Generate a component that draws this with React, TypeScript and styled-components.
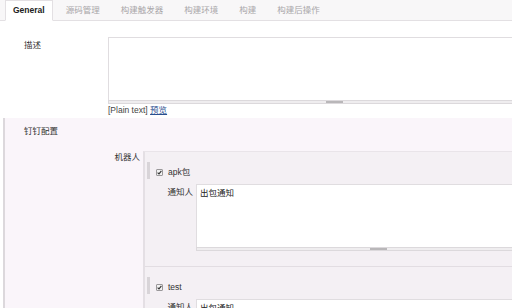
import React from "react";
import styled, { createGlobalStyle } from "styled-components";

const Global = createGlobalStyle`
  html, body { margin: 0; padding: 0; background: #ffffff; overflow: hidden; }
  body {
    font-family: "Liberation Sans", "Noto Sans CJK SC", sans-serif;
    font-size: 8.5px;
    color: #333;
  }
`;

const Page = styled.div`
  width: 560px;
  height: 308px;
  overflow: hidden;
`;

const TabBar = styled.div`
  display: flex;
  align-items: flex-end;
  height: 20px;
  padding-left: 5px;
  background: #f8f7f8;
  border-bottom: 1px solid #e3e0e3;
`;

const Tab = styled.div<{ $active?: boolean }>`
  height: ${(p) => (p.$active ? "19px" : "19px")};
  line-height: 19px;
  padding: 0 7px;
  margin-right: 5px;
  margin-bottom: ${(p) => (p.$active ? "-1px" : "0")};
  color: ${(p) => (p.$active ? "#222" : "#a8a6a8")};
  font-weight: ${(p) => (p.$active ? "bold" : "normal")};
  background: ${(p) => (p.$active ? "#ffffff" : "transparent")};
  border: 1px solid ${(p) => (p.$active ? "#e3e0e3" : "transparent")};
  border-bottom: ${(p) => (p.$active ? "1px solid #ffffff" : "none")};
`;

const Row = styled.div`
  display: flex;
  padding-top: 16px;
`;

const Label = styled.div<{ $width: number; $align?: string; $pl?: number; $pt?: number }>`
  width: ${(p) => p.$width}px;
  flex-shrink: 0;
  box-sizing: border-box;
  padding-left: ${(p) => p.$pl ?? 0}px;
  padding-right: ${(p) => (p.$align === "right" ? 3 : 0)}px;
  padding-top: ${(p) => p.$pt ?? 0}px;
  text-align: ${(p) => p.$align ?? "left"};
  line-height: 11px;
  color: #333;
`;

const Field = styled.div`
  flex: 1;
  display: flex;
  flex-direction: column;
  min-width: 0;
`;

const TextBox = styled.div<{ $height: number }>`
  height: ${(p) => p.$height}px;
  box-sizing: border-box;
  background: #ffffff;
  border: 1px solid #e0dde0;
  border-bottom: none;
  padding: 3px 3px;
  line-height: 11px;
  color: #222;
`;

const ResizeBar = styled.div`
  height: 4px;
  box-sizing: border-box;
  background: #efedef;
  border: 1px solid #dcd9dc;
  display: flex;
  justify-content: center;
  align-items: center;
`;

const Grip = styled.div`
  width: 17px;
  height: 2px;
  background: #b9b7b9;
`;

const Hint = styled.div`
  line-height: 11px;
  color: #444;
  margin-top: 1px;
`;

const PreviewLink = styled.a`
  color: #2a4f8f;
  text-decoration: underline;
`;

const Section = styled.div`
  margin-top: 2px;
  margin-left: 3px;
  border-left: 2px solid #dcd8dc;
  background: #faf5fa;
  padding-top: 8px;
`;

const SectionTitle = styled.div`
  padding-left: 19px;
  line-height: 11px;
  color: #333;
`;

const RobotRow = styled.div`
  display: flex;
  margin-top: 14px;
`;

const Repeater = styled.div`
  flex: 1;
  background: #f4f0f4;
  border-left: 2px solid #e4dfe4;
  border-top: 1px solid #e9e4e9;
`;

const Item = styled.div`
  display: flex;
  padding-top: 10px;
  padding-bottom: 15px;
  border-bottom: 1px solid #e2dde2;
`;

const Handle = styled.div`
  width: 3px;
  height: 17px;
  margin-left: 2px;
  background: #d8d4d8;
  flex-shrink: 0;
`;

const ItemBody = styled.div`
  flex: 1;
  margin-left: 6px;
  padding-top: 5px;
`;

const CheckRow = styled.div`
  display: flex;
  align-items: center;
  gap: 5px;
  height: 11px;
  line-height: 11px;
  color: #333;
`;

const CheckBox = styled.span`
  width: 7px;
  height: 7px;
  box-sizing: border-box;
  border: 1px solid #9a989a;
  background: #f2f2f2;
  border-radius: 1px;
  display: flex;
  align-items: center;
  justify-content: center;
`;

const NotifyRow = styled.div`
  display: flex;
  margin-top: 6px;
`;

const tabs = ["General", "源码管理", "构建触发器", "构建环境", "构建", "构建后操作"];

const robots = [
  { name: "apk包", notify: "出包通知" },
  { name: "test", notify: "出包通知" },
];

function Check() {
  return (
    <CheckBox>
      <svg width="5" height="5" viewBox="0 0 5 5">
        <path d="M0.6 2.6 L2 3.9 L4.4 0.8" fill="none" stroke="#333" strokeWidth="1.1" />
      </svg>
    </CheckBox>
  );
}

export default function App() {
  return (
    <Page>
      <Global />
      <TabBar>
        {tabs.map((t, i) => (
          <Tab key={t} $active={i === 0}>
            {t}
          </Tab>
        ))}
      </TabBar>

      <Row>
        <Label $width={108} $pl={24} $pt={3}>描述</Label>
        <Field>
          <TextBox $height={63} />
          <ResizeBar>
            <Grip />
          </ResizeBar>
          <Hint>
            [Plain text] <PreviewLink>预览</PreviewLink>
          </Hint>
        </Field>
      </Row>

      <Section>
        <SectionTitle>钉钉配置</SectionTitle>
        <RobotRow>
          <Label $width={138} $align="right" $pt={1}>机器人</Label>
          <Repeater>
            {robots.map((r) => (
              <Item key={r.name}>
                <Handle />
                <ItemBody>
                  <CheckRow>
                    <Check />
                    <span>{r.name}</span>
                  </CheckRow>
                  <NotifyRow>
                    <Label $width={40} $align="right" $pt={3}>通知人</Label>
                    <Field>
                      <TextBox $height={63}>{r.notify}</TextBox>
                      <ResizeBar>
                        <Grip />
                      </ResizeBar>
                    </Field>
                  </NotifyRow>
                </ItemBody>
              </Item>
            ))}
          </Repeater>
        </RobotRow>
      </Section>
    </Page>
  );
}
